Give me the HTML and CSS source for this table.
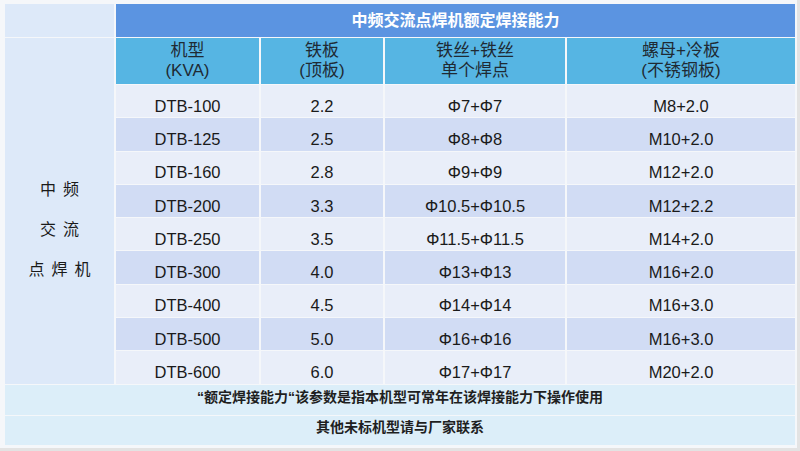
FILE: index.html
```html
<!DOCTYPE html>
<html lang="zh">
<head>
<meta charset="utf-8">
<title>中频交流点焊机额定焊接能力</title>
<link rel="stylesheet" href="styles.css">
</head>
<body>
<div class="frame">
  <div class="table">
    <div class="corner"></div>
    <div class="title">中频交流点焊机额定焊接能力</div>
    <div class="side"><span>中频</span><span>交流</span><span>点焊机</span></div>
    <div class="head">机型<br>(KVA)</div>
    <div class="head">铁板<br>(顶板)</div>
    <div class="head">铁丝+铁丝<br>单个焊点</div>
    <div class="head">螺母+冷板<br>(不锈钢板)</div>

    <div class="cell">DTB-100</div><div class="cell">2.2</div><div class="cell">Φ7+Φ7</div><div class="cell">M8+2.0</div>
    <div class="cell alt">DTB-125</div><div class="cell alt">2.5</div><div class="cell alt">Φ8+Φ8</div><div class="cell alt">M10+2.0</div>
    <div class="cell">DTB-160</div><div class="cell">2.8</div><div class="cell">Φ9+Φ9</div><div class="cell">M12+2.0</div>
    <div class="cell alt">DTB-200</div><div class="cell alt">3.3</div><div class="cell alt">Φ10.5+Φ10.5</div><div class="cell alt">M12+2.2</div>
    <div class="cell">DTB-250</div><div class="cell">3.5</div><div class="cell">Φ11.5+Φ11.5</div><div class="cell">M14+2.0</div>
    <div class="cell alt">DTB-300</div><div class="cell alt">4.0</div><div class="cell alt">Φ13+Φ13</div><div class="cell alt">M16+2.0</div>
    <div class="cell">DTB-400</div><div class="cell">4.5</div><div class="cell">Φ14+Φ14</div><div class="cell">M16+3.0</div>
    <div class="cell alt">DTB-500</div><div class="cell alt">5.0</div><div class="cell alt">Φ16+Φ16</div><div class="cell alt">M16+3.0</div>
    <div class="cell">DTB-600</div><div class="cell">6.0</div><div class="cell">Φ17+Φ17</div><div class="cell">M20+2.0</div>

    <div class="foot">“额定焊接能力“该参数是指本机型可常年在该焊接能力下操作使用</div>
    <div class="foot">其他未标机型请与厂家联系</div>
  </div>
</div>
</body>
</html>
```
FILE: styles.css
```css
html, body {
  margin: 0;
  padding: 0;
}
body {
  background: #e3e3e3;
  font-family: "Liberation Sans", "Noto Sans CJK SC", sans-serif;
  color: #1a1a1a;
}
.frame {
  width: 797px;
  height: 448px;
  box-sizing: border-box;
  padding: 4px 2px 0 5px;
  background: #f5f7fa;
}
.table {
  display: grid;
  grid-template-columns: 109px 143px 122px 180px 228px;
  grid-template-rows: 33px 46px repeat(9, 32.3px) 30px 29px;
  column-gap: 2px;
  row-gap: 1px;
}
.corner {
  background: #dde9f9;
}
.title {
  grid-column: 2 / 6;
  background: #5b94e1;
  color: #ffffff;
  font-weight: bold;
  font-size: 16px;
  display: flex;
  align-items: center;
  justify-content: center;
  padding-bottom: 3px;
  box-sizing: border-box;
}
.side {
  grid-column: 1;
  grid-row: 2 / 12;
  background: #dde9f9;
  display: flex;
  flex-direction: column;
  align-items: center;
  justify-content: center;
  gap: 18px;
  padding-top: 38px;
  font-size: 16px;
  letter-spacing: 7px;
  color: #1a1a1a;
}
.side span {
  line-height: 22px;
  margin-right: -7px;
}
.head {
  background: #56b5e3;
  font-size: 17px;
  line-height: 20px;
  text-align: center;
  display: flex;
  align-items: center;
  justify-content: center;
  color: #1f2a33;
}
.cell {
  background: #e9eef9;
  font-size: 16.5px;
  display: flex;
  align-items: center;
  justify-content: center;
  padding-top: 10px;
  box-sizing: border-box;
}
.cell.alt {
  background: #d1dcf4;
}
.foot {
  grid-column: 1 / 6;
  background: #dceef9;
  font-size: 14px;
  font-weight: bold;
  display: flex;
  align-items: center;
  justify-content: center;
  color: #1f1f1f;
  padding-bottom: 8px;
  box-sizing: border-box;
}
```
